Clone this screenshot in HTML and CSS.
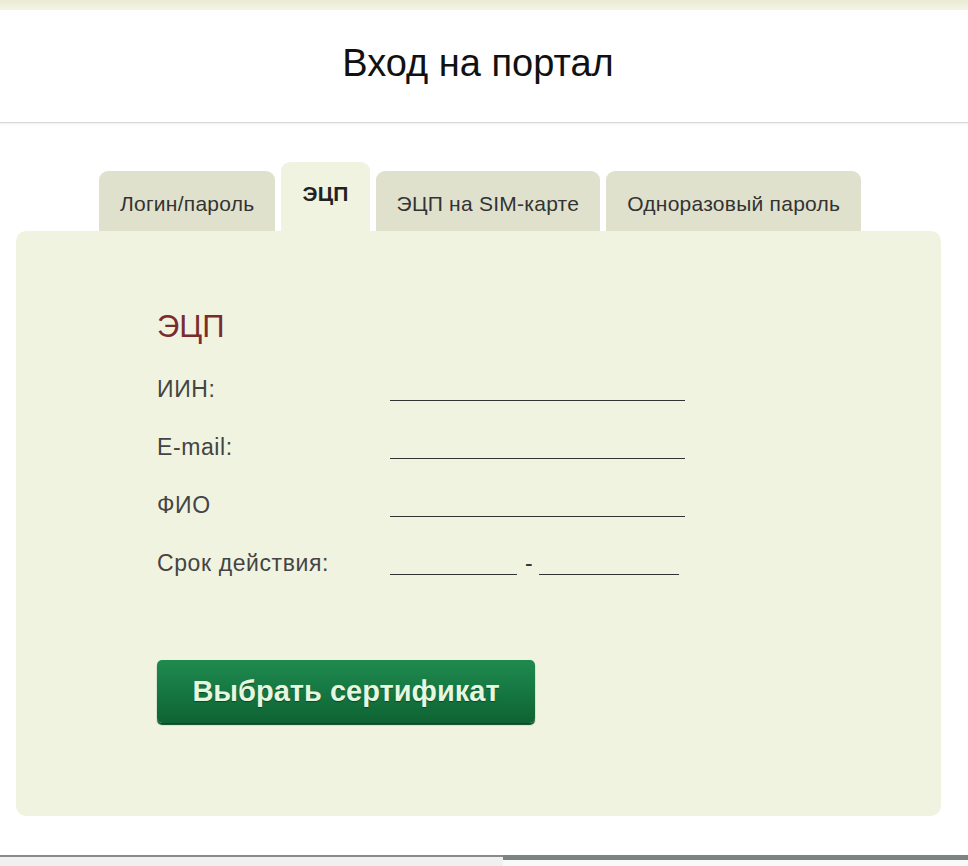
FILE: index.html
```html
<!DOCTYPE html>
<html>
<head>
	<meta charset="utf-8">
	<title>Вход на портал</title>
	<link rel="stylesheet" href="styles.css">
</head>
<body>
	<div class="topstrip"></div>
	<div class="header">
		<h1>Вход на портал</h1>
	</div>
	<div class="content">
		<div class="tabs">
			<div class="tab">Логин/пароль</div>
			<div class="tab active">ЭЦП</div>
			<div class="tab">ЭЦП на SIM-карте</div>
			<div class="tab">Одноразовый пароль</div>
		</div>
		<div class="panel">
			<h2>ЭЦП</h2>
			<div class="row">
				<span class="label">ИИН:</span>
				<span class="blank long"></span>
			</div>
			<div class="row">
				<span class="label">E-mail:</span>
				<span class="blank long"></span>
			</div>
			<div class="row">
				<span class="label">ФИО</span>
				<span class="blank long"></span>
			</div>
			<div class="row">
				<span class="label">Срок действия:</span>
				<span class="blank from"></span>
				<span class="dash">-</span>
				<span class="blank to"></span>
			</div>
			<button class="btn">Выбрать сертификат</button>
		</div>
	</div>
	<div class="bottombar">
		<div class="bar-left"></div>
		<div class="bar-right"></div>
	</div>
</body>
</html>
```

FILE: styles.css
```css
body {
	margin: 0;
	background: #ffffff;
	font-family: "Liberation Sans", Arial, sans-serif;
	color: #333333;
}
.topstrip {
	height: 10px;
	background: linear-gradient(#e9ebd3, #f3f4e6);
}
.header {
	height: 112px;
	border-bottom: 1px solid #d8d8d8;
	box-shadow: 0 1px 2px #eeeeee;
	display: flex;
	align-items: center;
	justify-content: center;
}
.header h1 {
	margin: 0;
	margin-top: -6px;
	font-size: 38px;
	font-weight: normal;
	color: #111111;
	padding-right: 12px;
}
.content {
	padding-top: 39px;
	padding-left: 16px;
	width: 925px;
}
.tabs {
	display: flex;
	align-items: flex-end;
	gap: 6px;
	padding-left: 83px;
}
.tab {
	height: 60px;
	box-sizing: border-box;
	padding: 21px 21px 0 21px;
	background: #dfe1cc;
	border-radius: 9px 9px 0 0;
	font-size: 21px;
	letter-spacing: 0.25px;
	color: #333333;
}
.tab.active {
	height: 69px;
	padding-top: 20px;
	background: #f1f3e1;
	font-weight: bold;
	color: #222222;
}
.panel {
	background: #f1f3e1;
	border-radius: 10px;
	height: 585px;
	box-sizing: border-box;
	padding: 78px 0 0 141px;
}
.panel h2 {
	margin: 0 0 15px 0;
	font-size: 31px;
	font-weight: normal;
	color: #7a2c2c;
}
.row {
	height: 58px;
	display: flex;
	align-items: center;
	font-size: 23px;
	letter-spacing: 0.6px;
	color: #444444;
}
.label {
	width: 233px;
}
.blank {
	display: inline-block;
	border-bottom: 1px solid #333333;
	height: 12px;
	margin-top: 10px;
}
.blank.long {
	width: 295px;
}
.blank.from {
	width: 127px;
}
.blank.to {
	width: 140px;
}
.dash {
	margin: 0 6px 0 8px;
	color: #333333;
}
.btn {
	margin-top: 68px;
	width: 378px;
	height: 63px;
	border: none;
	border-radius: 5px;
	background: linear-gradient(#1f8a4e, #157541 55%, #0e6332);
	box-shadow: 0 2px 1px #0b4a25;
	font-family: "Liberation Sans", Arial, sans-serif;
	font-size: 29px;
	font-weight: bold;
	color: #e6f7e0;
	text-shadow: 0 1px 1px #0b4a24;
}
.bottombar {
	margin-top: 39px;
	display: flex;
	height: 11px;
}
.bar-left {
	width: 503px;
	border-top: 2px solid #8a8a8a;
	background: #f0f0f0;
}
.bar-right {
	flex: 1;
	border-top: 5px solid #7b8383;
	background: #f8fafa;
}
```
